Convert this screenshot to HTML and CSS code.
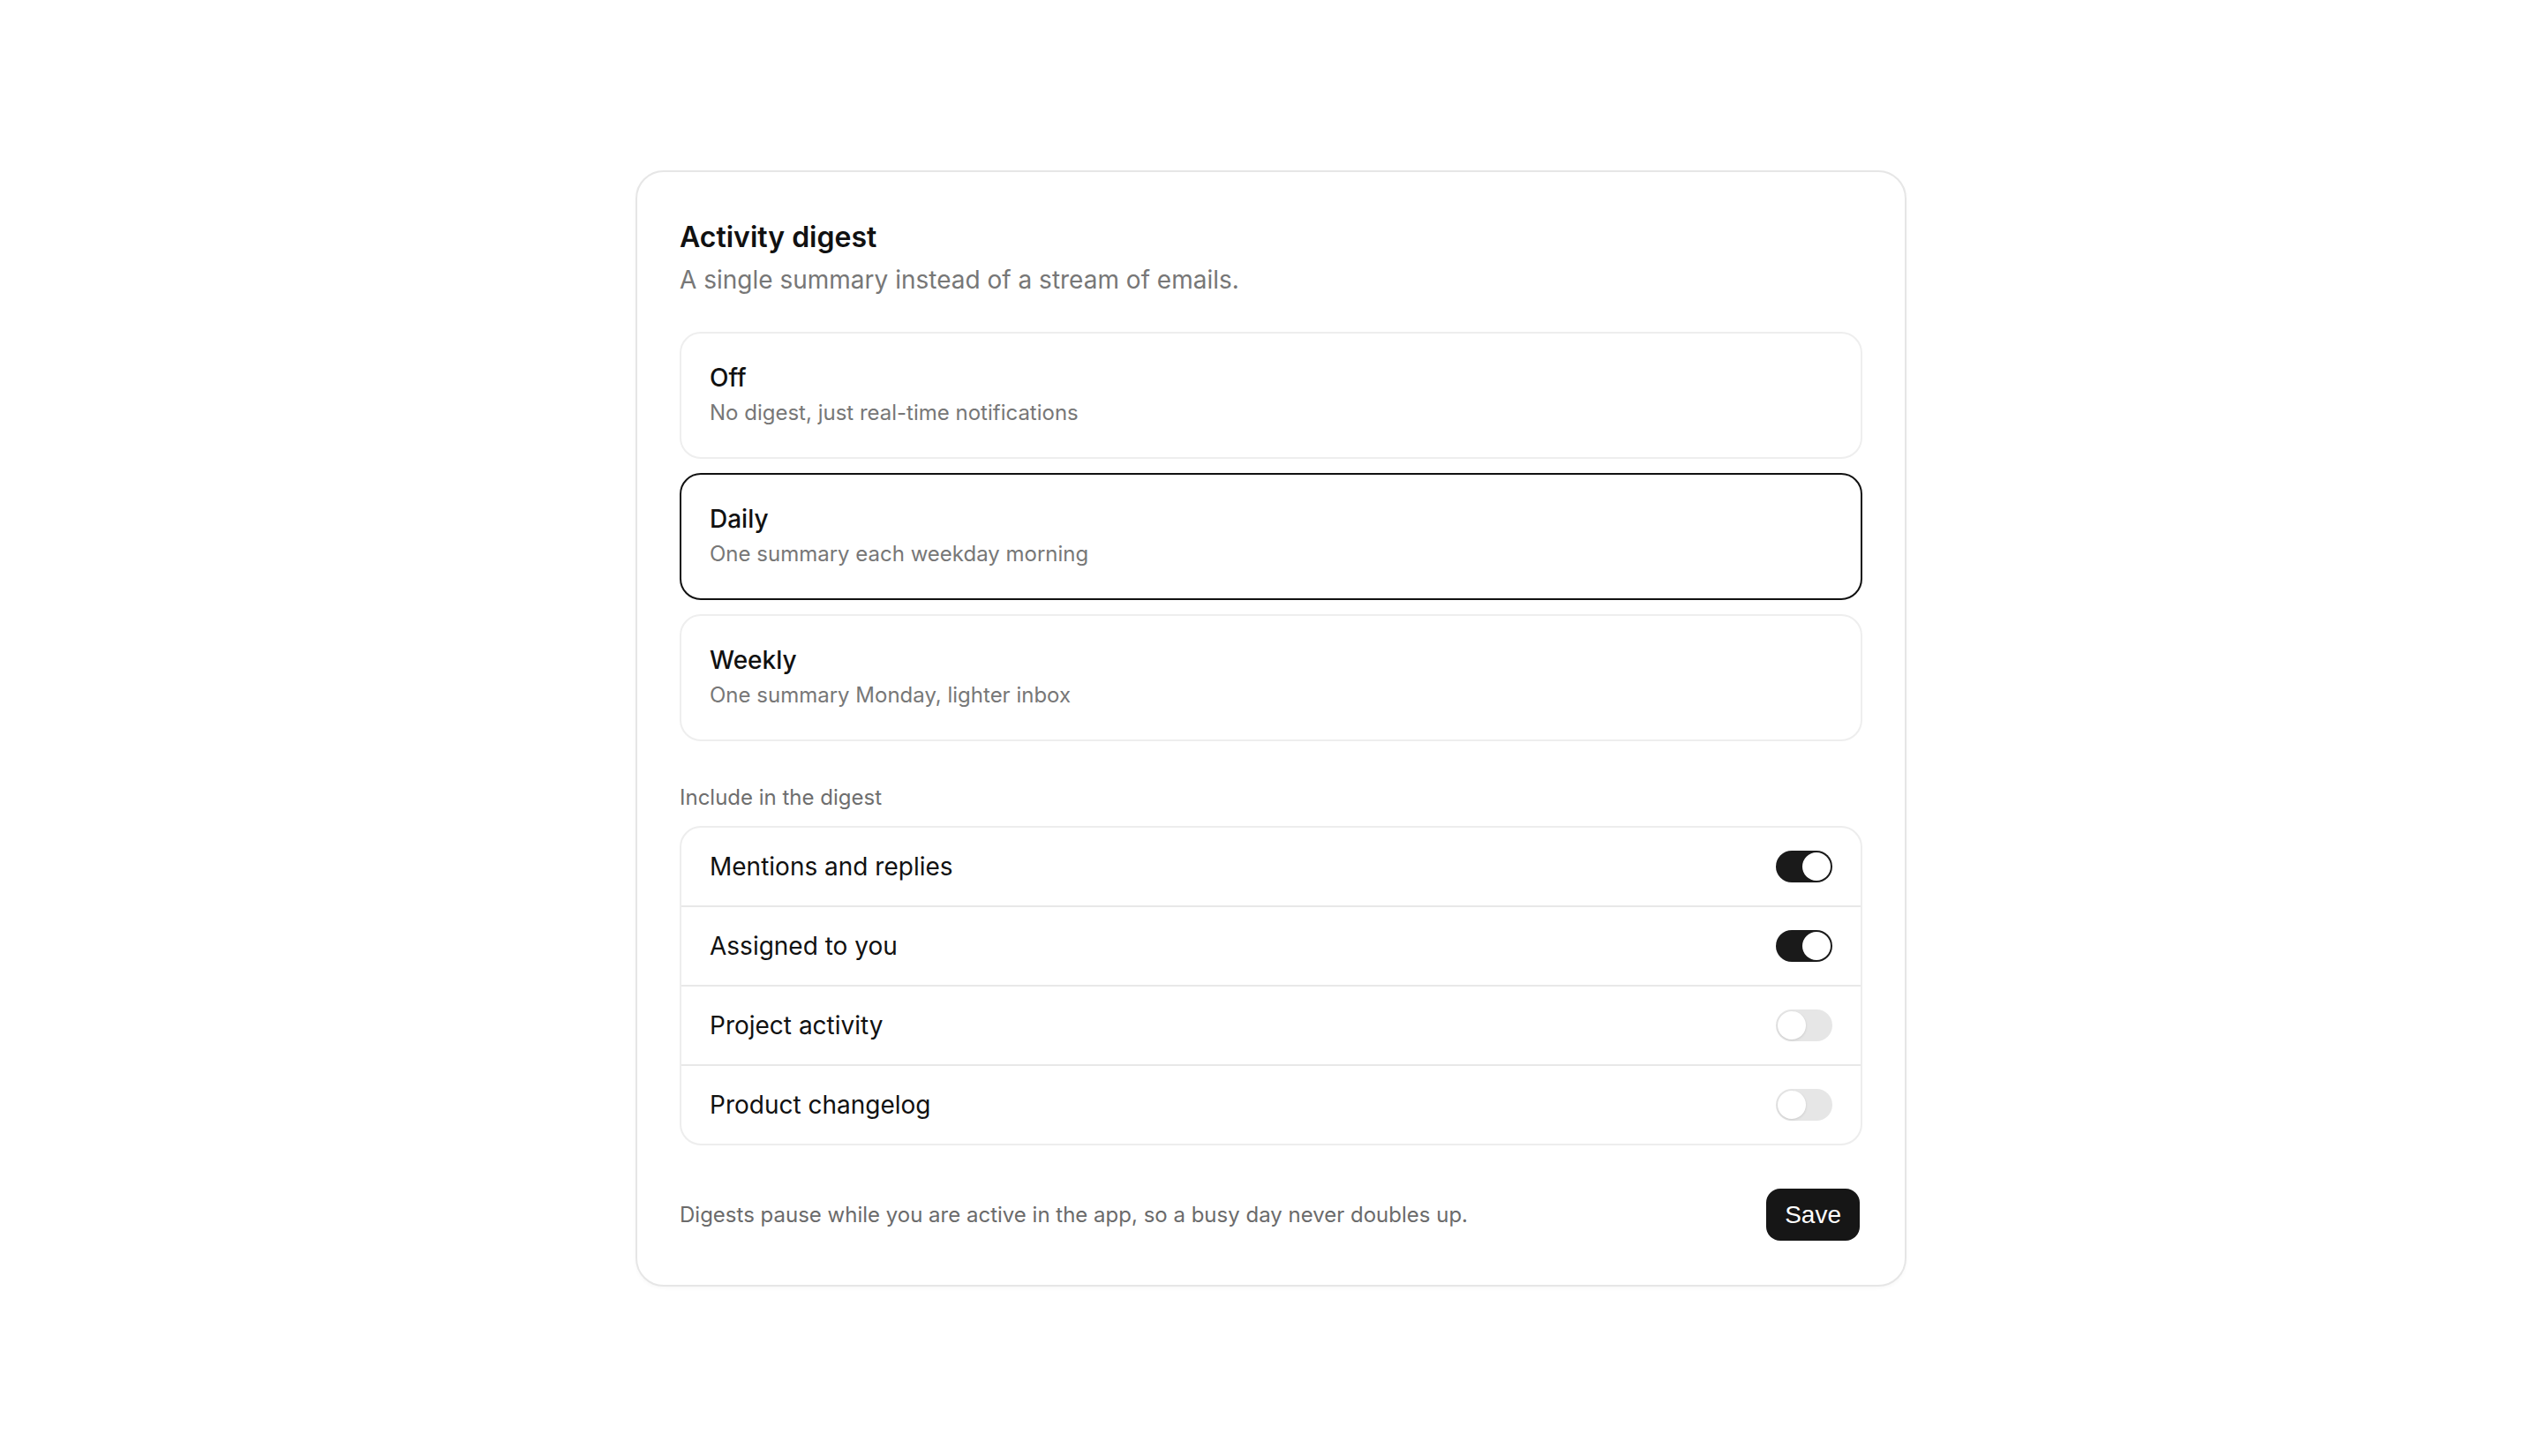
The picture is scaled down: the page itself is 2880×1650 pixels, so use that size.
FILE: index.html
```html
<!DOCTYPE html>
<html lang="en">
<head>
    <meta charset="UTF-8">
    <meta name="viewport" content="width=device-width, initial-scale=1.0">
    <title>Activity digest</title>
    <link rel="stylesheet" href="styles.css">
</head>
<body>
    <div class="card">
        <div class="card-header">
            <h1 class="title">Activity digest</h1>
            <p class="subtitle">A single summary instead of a stream of emails.</p>
        </div>

        <!-- Frequency choices -->
        <div class="options">
            <div class="option">
                <div class="option-title">Off</div>
                <div class="option-desc">No digest, just real-time notifications</div>
            </div>
            <div class="option selected">
                <div class="option-title">Daily</div>
                <div class="option-desc">One summary each weekday morning</div>
            </div>
            <div class="option">
                <div class="option-title">Weekly</div>
                <div class="option-desc">One summary Monday, lighter inbox</div>
            </div>
        </div>

        <div class="section-label">Include in the digest</div>
        <div class="toggle-list">
            <div class="toggle-row">
                <span>Mentions and replies</span>
                <span class="toggle on"></span>
            </div>
            <div class="toggle-row">
                <span>Assigned to you</span>
                <span class="toggle on"></span>
            </div>
            <div class="toggle-row">
                <span>Project activity</span>
                <span class="toggle"></span>
            </div>
            <div class="toggle-row">
                <span>Product changelog</span>
                <span class="toggle"></span>
            </div>
        </div>

        <div class="card-footer">
            <p class="note">Digests pause while you are active in the app, so a busy day never doubles up.</p>
            <button class="save-btn">Save</button>
        </div>
    </div>
</body>
</html>
```

FILE: styles.css
```css
/* sizes are doubled: the page is shot at 2880px wide */
body {
    margin: 0;
    padding: 0;
    display: flex;
    justify-content: center;
    align-items: center;
    min-height: 100vh;
    background-color: #fff;
    font-family: Inter, "Noto Sans", sans-serif;
    color: #111;
}
.card {
    width: 1440px;
    box-sizing: border-box;
    padding: 50px 48px 48px;
    border: 2px solid #e6e6e6;
    border-radius: 32px;
    background-color: #fff;
    box-shadow: 0 2px 4px rgba(0, 0, 0, 0.03);
}
.card-header {
    margin-bottom: 39px;
}
.title {
    margin: 0;
    font-size: 32px;
    line-height: 48px;
    font-weight: 600;
    color: #111;
}
.subtitle {
    margin: 4px 0 0;
    font-size: 28px;
    line-height: 40px;
    color: #777;
}
.options {
    display: flex;
    flex-direction: column;
    gap: 16px;
}
.option {
    padding: 30px 32px 32px;
    border: 2px solid #eeeeee;
    border-radius: 24px;
}
.option.selected {
    border-color: #111;
}
.option-title {
    font-size: 28px;
    line-height: 40px;
    font-weight: 500;
    color: #111;
}
.option-desc {
    margin-top: 2px;
    font-size: 24px;
    line-height: 36px;
    color: #777;
}
.section-label {
    margin: 48px 0 16px;
    font-size: 24px;
    line-height: 32px;
    color: #6e6e6e;
}
.toggle-list {
    border: 2px solid #ededed;
    border-radius: 24px;
}
.toggle-row {
    display: flex;
    justify-content: space-between;
    align-items: center;
    height: 88px;
    padding: 0 32px;
    font-size: 28px;
    color: #111;
}
.toggle-row + .toggle-row {
    border-top: 2px solid #e8e8e8;
}
.toggle {
    position: relative;
    width: 64px;
    height: 36px;
    border-radius: 18px;
    background-color: #e6e6e6;
}
.toggle::after {
    content: "";
    position: absolute;
    top: 2px;
    left: 2px;
    width: 32px;
    height: 32px;
    border-radius: 50%;
    background-color: #fff;
    box-shadow: 0 1px 3px rgba(0, 0, 0, 0.12);
}
.toggle.on {
    background-color: #1a1a1a;
}
.toggle.on::after {
    left: 30px;
    box-shadow: none;
}
.card-footer {
    display: flex;
    justify-content: space-between;
    align-items: center;
    min-height: 62px;
    margin-top: 48px;
}
.note {
    margin: 0;
    font-size: 24px;
    line-height: 32px;
    color: #6b6b6b;
}
.save-btn {
    margin-right: 3px;
    padding: 13px 21px;
    border: none;
    border-radius: 16px;
    background-color: #161616;
    color: #fff;
    font-family: "Liberation Sans", Arial, sans-serif;
    font-size: 28px;
    line-height: 33px;
    cursor: pointer;
}
```
